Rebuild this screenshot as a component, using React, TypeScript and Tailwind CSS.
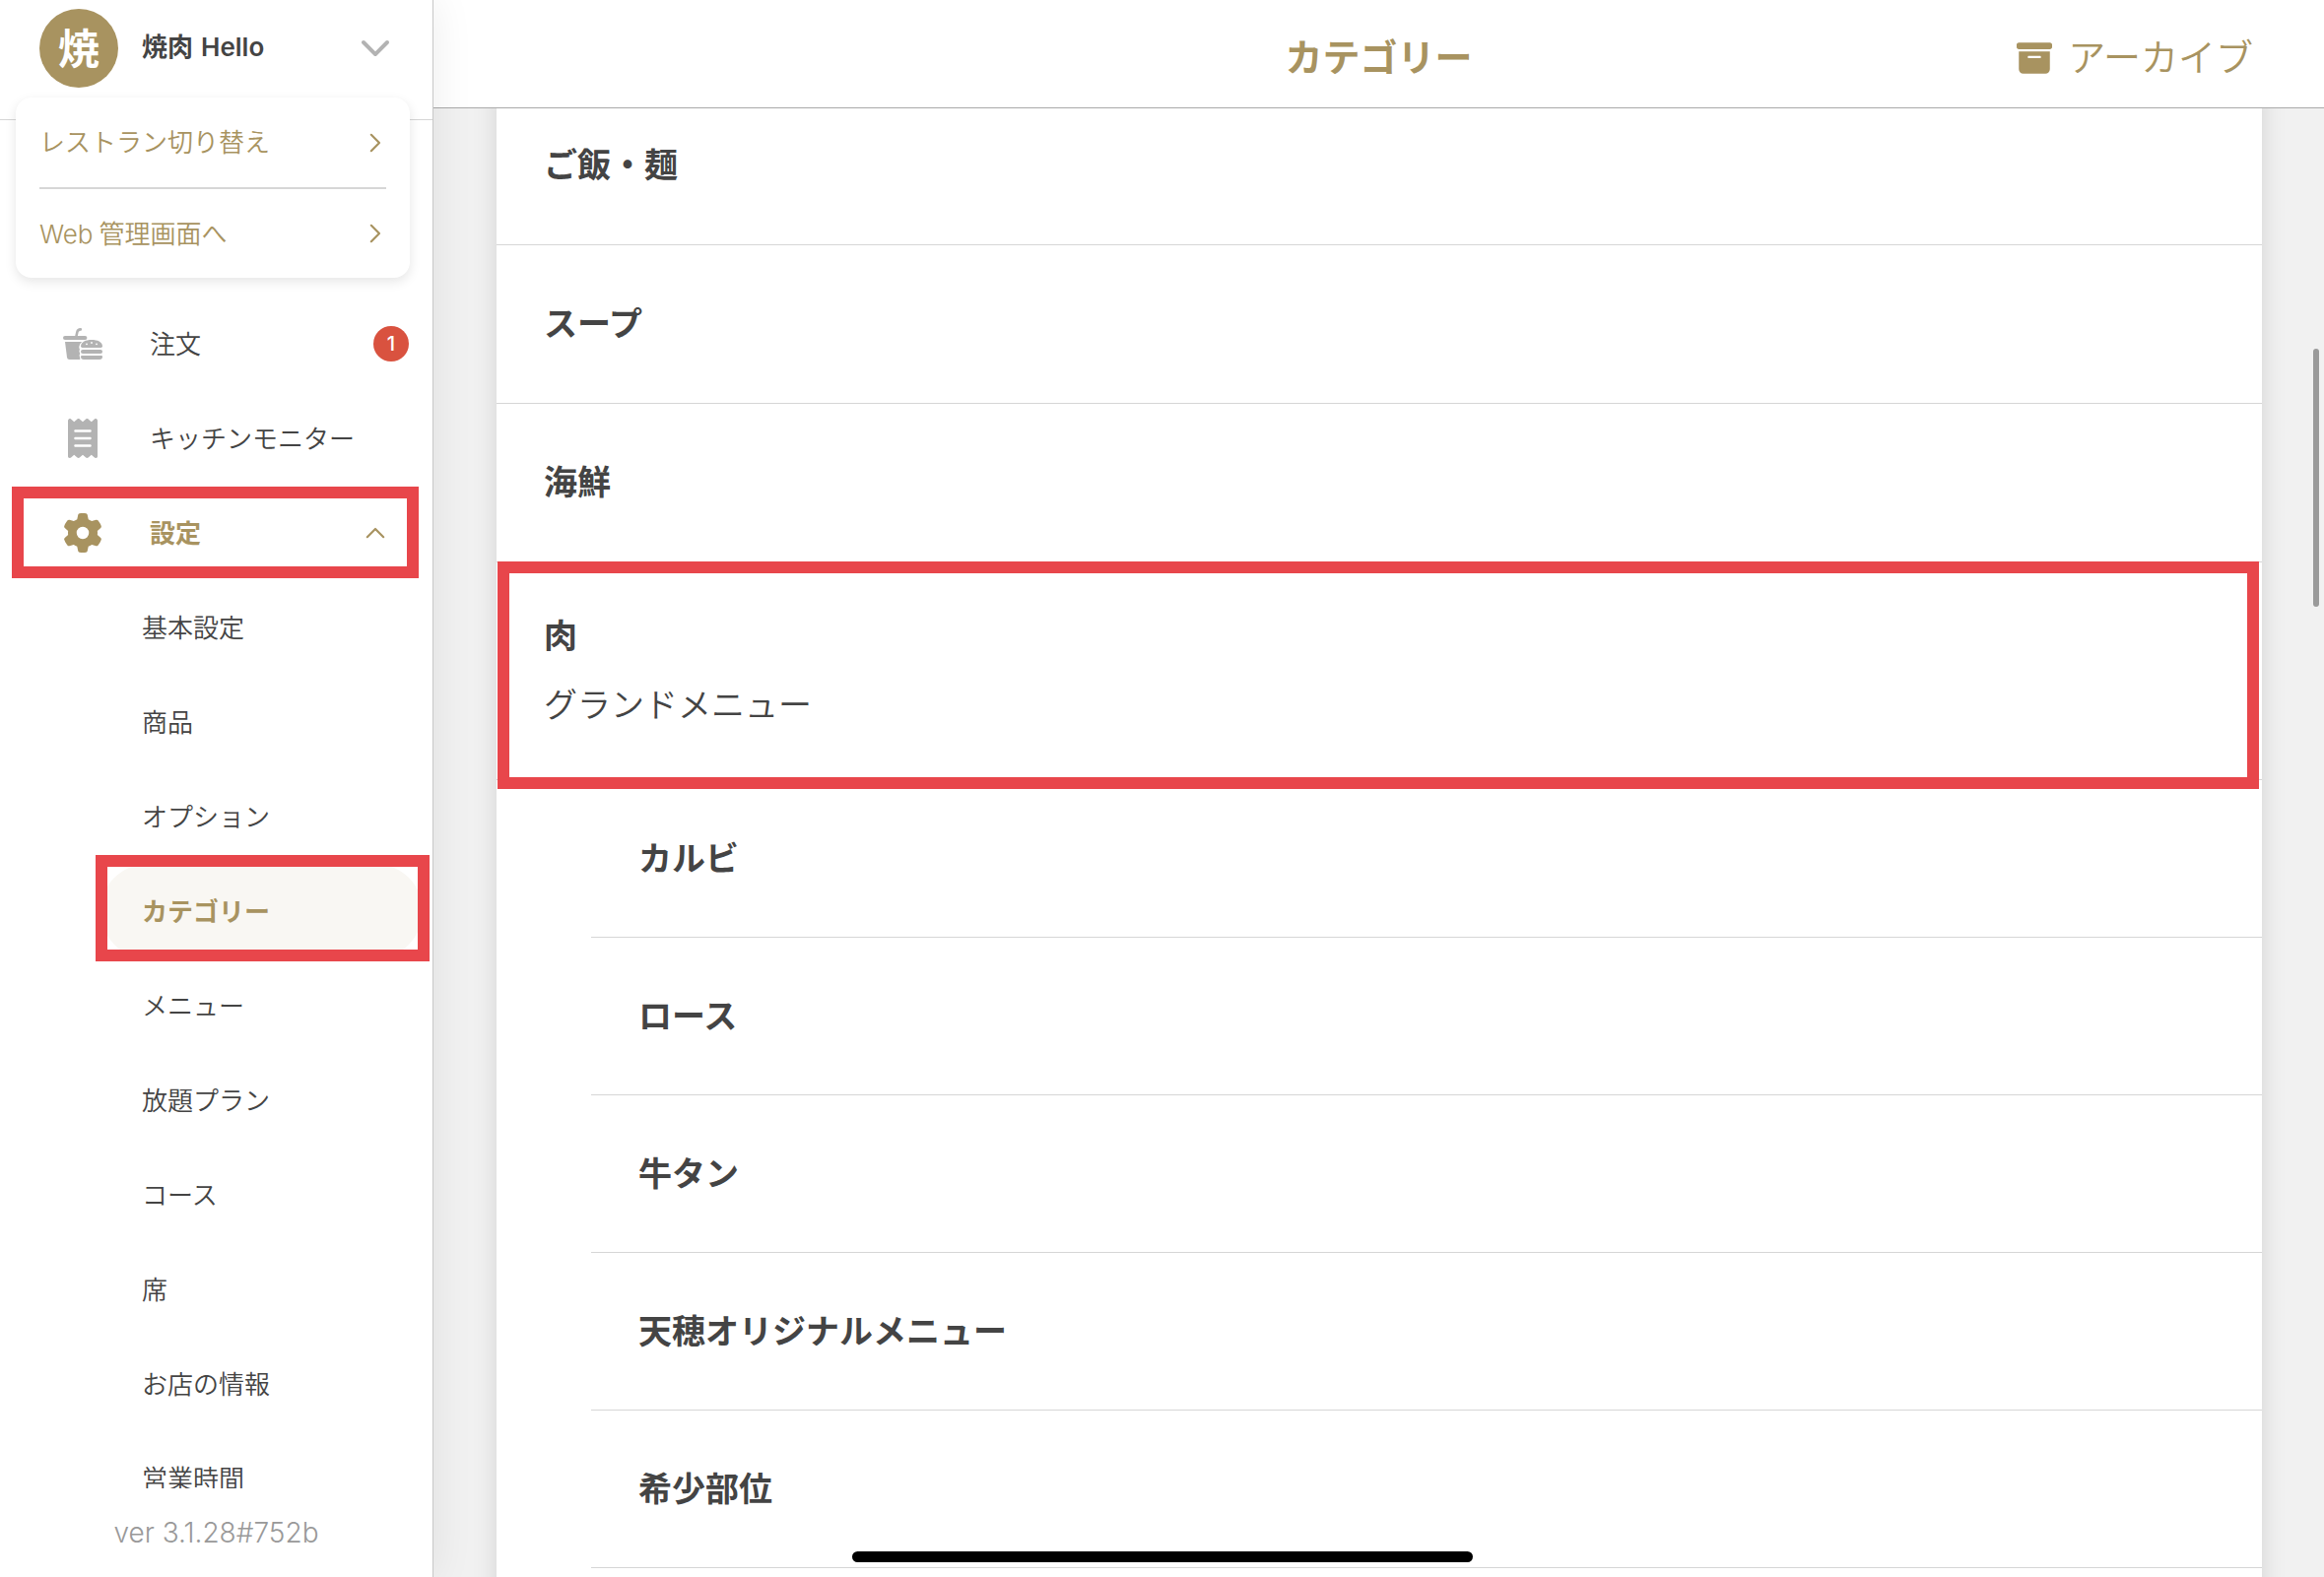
import { useState } from 'react';
import clsx from 'clsx';
import { FaBoxArchive, FaChevronDown, FaGear, FaReceipt } from 'react-icons/fa6';

interface Category {
  name: string;
  menu?: string;
  marked?: boolean;
  children?: string[];
}

const SETTINGS = [
  '基本設定',
  '商品',
  'オプション',
  'カテゴリー',
  'メニュー',
  '放題プラン',
  'コース',
  '席',
  'お店の情報',
  '営業時間',
];

const CATEGORIES: Category[] = [
  { name: 'ご飯・麺' },
  { name: 'スープ' },
  { name: '海鮮' },
  {
    name: '肉',
    menu: 'グランドメニュー',
    marked: true,
    children: ['カルビ', 'ロース', '牛タン', '天穂オリジナルメニュー', '希少部位'],
  },
];

function Chevron({ className }: { className?: string }) {
  return (
    <svg className={className} width="12" height="20" viewBox="0 0 12 20" fill="none" aria-hidden="true">
      <path d="M1.8 1.8 10 10l-8.2 8.2" stroke="currentColor" strokeWidth="2.2" strokeLinecap="round" strokeLinejoin="round" />
    </svg>
  );
}

function BurgerSodaIcon() {
  return (
    <svg width="40" height="32" viewBox="0 0 40 32" fill="currentColor" aria-hidden="true">
      <path d="M13.3 9 14.4 4Q15 1.4 17.8 1.4" fill="none" stroke="currentColor" strokeWidth="2.6" strokeLinecap="round" />
      <rect x="0" y="8" width="24.4" height="4" rx="2" />
      <path d="M2 14h17.2Q16.4 16 16.3 19q0 1.6.6 2.4-1 2.4.3 4-1 2-.1 4-.1 1.6.3 2.6H6.4Q4.2 32 4 29.8Z" />
      <path d="M18 18.2C18.4 14 23 12 29 12s10.600 2 11 6.200Q40 20 38.400 20H19.600Q18 20 18 18.200Z" />
      <rect x="18" y="22" width="22" height="4" rx="2" />
      <path d="M19 28h20q1 0 1 1 0 3-3 3H21q-3 0-3-3 0-1 1-1Z" />
      <g fill="#fff">
        <circle cx="24" cy="16.300" r=".9" />
        <circle cx="29" cy="15" r=".9" />
        <circle cx="34" cy="16.300" r=".9" />
      </g>
    </svg>
  );
}

function Marker({ className }: { className: string }) {
  return <span aria-hidden="true" className={clsx('pointer-events-none absolute z-10 border-12 border-[#e8464b]', className)} />;
}

function AccountMenu() {
  return (
    <div className="absolute top-[99px] right-[23px] left-4 rounded-2xl bg-white px-6 shadow-[0_4px_12px_rgba(0,0,0,0.1)]">
      <a href="#switch" className="flex h-[93px] items-center justify-between border-b-2 border-[#d6d6d6] pr-[5px]">
        レストラン切り替え
        <Chevron />
      </a>
      <a href="#web" className="flex h-[90px] items-center justify-between pr-[5px]">
        <span>
          <span className="mr-1.5">Web</span>管理画面へ
        </span>
        <Chevron />
      </a>
    </div>
  );
}

function Sidebar() {
  const [open, setOpen] = useState(true);
  const [current, setCurrent] = useState('カテゴリー');

  return (
    <aside className="relative z-20 flex w-[440px] shrink-0 flex-col border-r border-[#c8c8c8] bg-white text-[26px] shadow-[0_0_40px_rgba(0,0,0,0.08)]">
      <div className="relative z-10 h-[122px] border-b border-[#d6d6d6] text-[#a89360]">
        <button type="button" className="flex w-full items-center pt-[9px] pr-[42px] pl-10 text-left">
          <span className="flex size-20 items-center justify-center rounded-full bg-[#a89360] text-[42px] font-bold text-white">
            焼
          </span>
          <span className="flex-1 pb-1 pl-6 font-semibold text-[#444]">
            <span className="mr-2">焼肉</span>Hello
          </span>
          <FaChevronDown className="mb-1 size-8 text-[#b3b3b3]" />
        </button>
        <AccountMenu />
      </div>

      <nav className="min-h-0 flex-1 overflow-hidden pt-[179px] text-[#444]">
        <a href="#orders" className="flex h-24 items-center pr-6 pl-16">
          <span className="w-22 text-[#b3b3b3]">
            <BurgerSodaIcon />
          </span>
          <span className="flex-1">注文</span>
          <span className="flex size-9 items-center justify-center rounded-full bg-[#d9523f] text-xl font-medium text-white">1</span>
        </a>
        <a href="#kitchen" className="flex h-24 items-center pr-6 pl-16">
          <span className="w-22 pl-[5px] text-[#b3b3b3]">
            <FaReceipt className="h-10 w-[30px]" />
          </span>
          キッチンモニター
        </a>
        <button
          type="button"
          aria-expanded={open}
          onClick={() => setOpen(!open)}
          className="relative flex h-24 w-full items-center pr-[52px] pl-16 text-left text-[#a89360]"
        >
          <span className="w-22">
            <FaGear className="size-10" />
          </span>
          <span className="flex-1 font-bold">設定</span>
          <Chevron className={open ? '-rotate-90' : 'rotate-90'} />
          <Marker className="top-px right-3.5 bottom-0.5 left-3" />
        </button>
        {open && (
          <ul>
            {SETTINGS.map((item) => (
              <li key={item} className="relative pr-2.5 pl-[102px]">
                <a
                  href="#settings"
                  onClick={() => setCurrent(item)}
                  className={clsx(
                    'flex h-24 items-center rounded-full pl-[42px]',
                    item === current && 'bg-[#f9f7f3] font-bold text-[#a89360]',
                  )}
                >
                  {item}
                </a>
                {item === 'カテゴリー' && <Marker className="-top-[9px] right-[3px] -bottom-[3px] left-[97px]" />}
              </li>
            ))}
          </ul>
        )}
      </nav>

      <p className="flex h-[90px] items-center justify-center text-[28px] text-[#999]">ver 3.1.28#752b</p>
    </aside>
  );
}

function CategoryRow({ category }: { category: Category }) {
  return (
    <li>
      <div
        className={clsx(
          'relative flex flex-col justify-center border-b border-[#d6d6d6] px-12',
          category.menu ? 'h-[221px]' : 'h-[161px]',
        )}
      >
        <h2 className="leading-[70px] font-bold">{category.name}</h2>
        {category.menu && <p className="leading-[70px]">{category.menu}</p>}
        {category.marked && <Marker className="-top-px right-[3px] -bottom-2.5 left-px" />}
      </div>
      {category.children && (
        <ul className="pl-24">
          {category.children.map((name) => (
            <li key={name} className="flex h-40 items-center border-b border-[#d6d6d6] px-12 font-bold">
              {name}
            </li>
          ))}
        </ul>
      )}
    </li>
  );
}

export default function App() {
  return (
    <div
      lang="ja"
      className="relative flex h-screen overflow-hidden bg-[#f1f1f1] font-['Inter','Noto_Sans_CJK_JP',sans-serif] font-[350] text-[#444]"
    >
      <Sidebar />

      <div className="flex min-w-0 flex-1 flex-col">
        <header className="relative z-10 grid h-[110px] shrink-0 grid-cols-[1fr_auto_1fr] items-center border-b border-[#aaa] bg-white pt-2 text-[38px] text-[#a89360]">
          <h1 className="col-start-2 font-bold">カテゴリー</h1>
          <button type="button" className="flex items-center gap-4 justify-self-end pr-[72px]">
            <FaBoxArchive className="size-9" />
            アーカイブ
          </button>
        </header>

        <main className="min-h-0 flex-1 overflow-hidden pr-[63px] pl-16">
          {/* list is scrolled slightly under the header */}
          <ul className="-mt-[22px] min-h-full bg-white pb-40 text-[34px] shadow-[0_0_24px_rgba(0,0,0,0.12)]">
            {CATEGORIES.map((category) => (
              <CategoryRow key={category.name} category={category} />
            ))}
          </ul>
        </main>
      </div>

      <div className="absolute top-[354px] right-[5px] z-20 h-[262px] w-1.5 rounded-full bg-[#9a9a9a]" />
      <div className="absolute bottom-[15px] left-1/2 z-20 h-[11px] w-[630px] -translate-x-1/2 rounded-full bg-black" />
    </div>
  );
}
